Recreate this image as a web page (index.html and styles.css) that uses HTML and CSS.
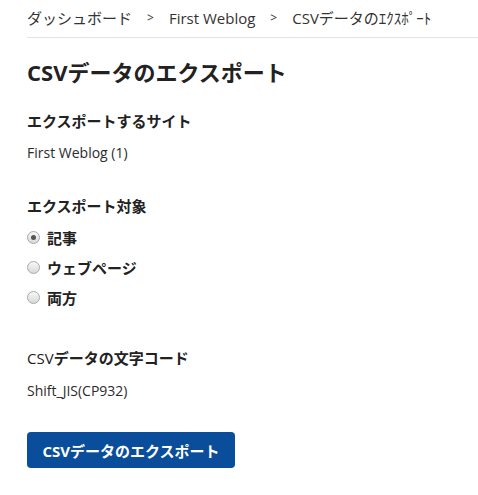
FILE: index.html
```html
<!DOCTYPE html>
<html lang="ja">
<head>
<meta charset="utf-8">
<link rel="stylesheet" href="styles.css">
</head>
<body>
<div class="page">
  <nav class="breadcrumb">
    <span>ダッシュボード</span>
    <span class="sep">&gt;</span>
    <span>First Weblog</span>
    <span class="sep">&gt;</span>
    <span>CSVデータのｴｸｽﾎﾟｰﾄ</span>
  </nav>
  <h1 class="title">CSVデータのエクスポート</h1>
  <section class="field">
    <h2 class="label">エクスポートするサイト</h2>
    <p class="value">First Weblog (1)</p>
  </section>
  <section class="field field-radios">
    <h2 class="label">エクスポート対象</h2>
    <ul class="radios">
      <li><span class="radio checked"></span><span class="rlabel">記事</span></li>
      <li><span class="radio"></span><span class="rlabel">ウェブページ</span></li>
      <li><span class="radio"></span><span class="rlabel">両方</span></li>
    </ul>
  </section>
  <section class="field field-enc">
    <h2 class="label"><span class="latin">CSV</span>データの文字コード</h2>
    <p class="value">Shift_JIS(CP932)</p>
  </section>
  <button class="btn">CSVデータのエクスポート</button>
</div>
</body>
</html>
```

FILE: styles.css
```css
html, body {
  margin: 0;
  padding: 0;
  background: #fff;
}
body {
  font-family: "Open Sans", "Noto Sans CJK JP", sans-serif;
  color: #2b2b2b;
  font-size: 14px;
}
.page {
  padding: 0 0 0 27px;
}
.breadcrumb {
  display: flex;
  align-items: center;
  height: 38px;
  border-bottom: 1px solid #e3e3e3;
  font-size: 15px;
  color: #333;
  box-sizing: border-box;
  padding-bottom: 2px;
}
.breadcrumb .sep {
  margin: 0 15px 0 15px;
  font-size: 12px;
}
.title {
  margin: 19px 0 0 0;
  font-size: 22px;
  line-height: 30px;
  font-weight: 700;
  color: #222;
}
.field {
  margin: 0;
}
.label {
  margin: 23px 0 0 0;
  font-size: 15px;
  line-height: 22px;
  font-weight: 700;
  color: #222;
}
.label .latin {
  font-weight: 400;
}
.value {
  margin: 10px 0 0 0;
  line-height: 22px;
}
.field-radios .label {
  margin-top: 31px;
}
.radios {
  list-style: none;
  margin: 5px 0 0 0;
  padding: 0;
}
.radios li {
  display: flex;
  align-items: center;
  height: 30px;
}
.radio {
  width: 11px;
  height: 11px;
  border: 1px solid #a9a9a9;
  border-radius: 50%;
  background: linear-gradient(#f8f8f8, #d8d8d8);
  margin-right: 7px;
  position: relative;
  flex: none;
}
.radio.checked::after {
  content: "";
  position: absolute;
  left: 3px;
  top: 3px;
  width: 5px;
  height: 5px;
  border-radius: 50%;
  background: #555;
}
.rlabel {
  font-weight: 700;
  font-size: 15px;
  color: #222;
}
.field-enc .label {
  margin-top: 35px;
}
.field-enc .value {
  margin-top: 11px;
}
.btn {
  margin-top: 30px;
  display: block;
  background: #0a4d9a;
  color: #fff;
  border: none;
  border-radius: 4px;
  height: 36px;
  width: 208px;
  padding: 0;
  font-family: "Open Sans", "Noto Sans CJK JP", sans-serif;
  font-size: 15px;
  font-weight: 700;
}
```
